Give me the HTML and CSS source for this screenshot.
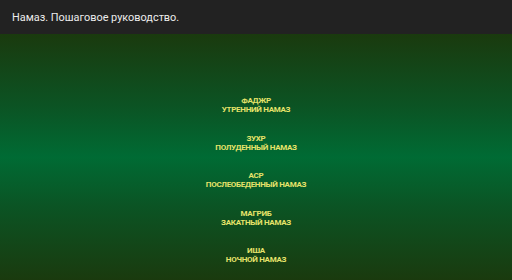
FILE: index.html
```html
<!DOCTYPE html>
<html lang="ru">
<head>
    <meta charset="UTF-8">
    <meta name="viewport" content="width=device-width, initial-scale=1.0">
    <title>Намаз</title>
    <link rel="stylesheet" href="styles.css">
</head>
<body>
    <header class="action_bar">
        <h1>Намаз. Пошаговое руководство.</h1>
    </header>

    <section class="main">
        <ul class="prayer_list">
            <li><span>ФАДЖР</span><span>УТРЕННИЙ НАМАЗ</span></li>
            <li><span>ЗУХР</span><span>ПОЛУДЕННЫЙ НАМАЗ</span></li>
            <li><span>АСР</span><span>ПОСЛЕОБЕДЕННЫЙ НАМАЗ</span></li>
            <li><span>МАГРИБ</span><span>ЗАКАТНЫЙ НАМАЗ</span></li>
            <li><span>ИША</span><span>НОЧНОЙ НАМАЗ</span></li>
        </ul>
    </section>
</body>
</html>
```

FILE: styles.css
```css
*{
    margin: 0;
    padding: 0;
    box-sizing: border-box;
    font-family: Roboto, "Noto Sans", sans-serif;
}

body{
    width: 512px;
    height: 280px;
    display: flex;
    flex-direction: column;
    background: #1b3a0f;
    overflow: hidden;
}

.action_bar{
    height: 34px;
    flex-shrink: 0;
    background: #222222;
    display: flex;
    align-items: center;
    padding-left: 12px;
}

.action_bar h1{
    font-size: 10.9px;
    font-weight: 400;
    color: #ececec;
}

.main{
    flex: 1;
    background: linear-gradient(to bottom, #1a3a0e 0%, #0b5424 30%, #006b34 50%, #0b5424 70%, #1a3a0e 100%);
    padding-top: 62px;
}

.prayer_list{
    list-style: none;
    display: flex;
    flex-direction: column;
    align-items: center;
    gap: 19.5px;
}

.prayer_list li{
    display: flex;
    flex-direction: column;
    align-items: center;
    font-size: 8px;
    line-height: 9px;
    letter-spacing: -0.3px;
    font-weight: 700;
    color: #e6e36a;
}
```
